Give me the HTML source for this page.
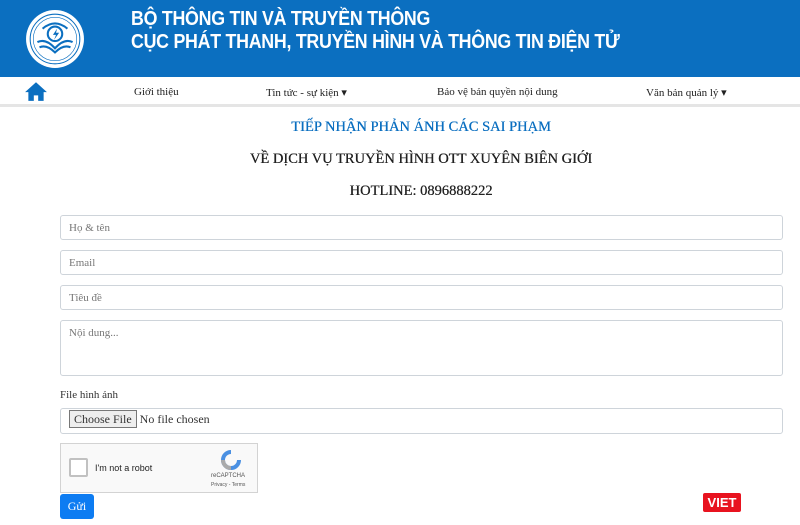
<!DOCTYPE html>
<html><head><meta charset="utf-8"><style>
*{box-sizing:border-box;margin:0;padding:0}
body{width:800px;height:525px;overflow:hidden;background:#fff;font-family:"Liberation Serif",serif;position:relative}
.hdr{position:absolute;left:0;top:0;width:800px;height:77px;background:#0b6fc0}
.t{position:absolute;left:131px;color:#fff;font-family:"Liberation Sans",sans-serif;font-weight:bold;font-size:20px;letter-spacing:-0.3px;transform:scaleX(0.89);transform-origin:0 0;white-space:nowrap}
.nav{position:absolute;top:77px;left:0;width:800px;height:30px;border-bottom:3px solid #e5e5e5;font-size:11px;color:#222}
.nav span{position:absolute;top:8px}
.c{position:absolute;left:42px;width:758px;text-align:center;font-size:14.5px;text-shadow:0.3px 0 0 currentColor}
.in{position:absolute;left:60px;width:723px;border:1px solid #ced4da;border-radius:3px;font-size:11px;color:#777;padding:6px 8px}
</style></head><body>
<div class="hdr">
<svg style="position:absolute;left:25px;top:9px" width="60" height="60" viewBox="0 0 58 58"><circle cx="29" cy="29" r="28" fill="#fff"/><circle cx="29" cy="29" r="24" fill="none" stroke="#0b6fc0" stroke-width="1"/><circle cx="29" cy="29" r="21" fill="none" stroke="#0b6fc0" stroke-width="0.6"/><circle cx="29" cy="24" r="7" fill="none" stroke="#0b6fc0" stroke-width="2"/><path d="M31 19l-4 6h3l-2 5 5-7h-3z" fill="#0b6fc0"/><path d="M12 32q8-4 17 6q9-10 17-6M14 37q7-3 15 5q8-8 15-5" fill="none" stroke="#0b6fc0" stroke-width="2"/><path d="M17 19q12-10 24 0" fill="none" stroke="#0b6fc0" stroke-width="2"/></svg>
<div class="t" style="top:8px">BỘ THÔNG TIN VÀ TRUYỀN THÔNG</div>
<div class="t" style="top:31px">CỤC PHÁT THANH, TRUYỀN HÌNH VÀ THÔNG TIN ĐIỆN TỬ</div>
</div>
<div class="nav">
<svg style="position:absolute;left:24px;top:4px" width="24" height="20" viewBox="0 0 22 18"><path d="M11 1L1 10h3v8h5v-5h4v5h5v-8h3z" fill="#0b6fc0"/></svg>
<span style="left:134px;top:9px">Giới thiệu</span>
<span style="left:266px;top:9px">Tin tức - sự kiện ▾</span>
<span style="left:437px;top:9px">Bảo vệ bản quyền nội dung</span>
<span style="left:646px;top:9px">Văn bản quản lý ▾</span>
</div>
<div class="c" style="top:119px;color:#0b6fc0">TIẾP NHẬN PHẢN ÁNH CÁC SAI PHẠM</div>
<div class="c" style="top:151px;color:#222">VỀ DỊCH VỤ TRUYỀN HÌNH OTT XUYÊN BIÊN GIỚI</div>
<div class="c" style="top:183px;color:#222">HOTLINE: 0896888222</div>
<div class="in" style="top:215px;height:25px">Họ &amp; tên</div>
<div class="in" style="top:250px;height:25px">Email</div>
<div class="in" style="top:285px;height:25px">Tiêu đề</div>
<div class="in" style="top:320px;height:56px">Nội dung...</div>
<div style="position:absolute;left:60px;top:389px;font-size:11px;color:#333">File hình ảnh</div>
<div class="in" style="top:408px;height:26px;padding:3px 8px;color:#333;font-size:12px"><span style="border:1px solid #777;background:#eee;padding:1px 4px">Choose File</span> No file chosen</div>
<div style="position:absolute;left:60px;top:443px;width:198px;height:50px;border:1px solid #d3d3d3;background:#f9f9f9;font-family:'Liberation Sans',sans-serif">
<div style="position:absolute;left:8px;top:14px;width:19px;height:19px;border:2px solid #c1c1c1;background:#fff;border-radius:2px"></div>
<div style="position:absolute;left:34px;top:19px;font-size:9px;color:#222">I'm not a robot</div>
<svg style="position:absolute;left:159px;top:6px" width="22" height="20" viewBox="0 0 22 20"><path d="M11 2a8 8 0 1 0 8 8" fill="none" stroke="#4a90e2" stroke-width="4"/><path d="M3 10a8 8 0 0 0 8 8" fill="none" stroke="#aaa" stroke-width="4"/></svg>
<div style="position:absolute;left:150px;top:29px;font-size:6px;color:#555">reCAPTCHA</div>
<div style="position:absolute;left:150px;top:38px;font-size:5px;color:#555">Privacy - Terms</div>
</div>
<div style="position:absolute;left:60px;top:494px;width:34px;height:25px;background:#0d7cf2;border-radius:3px;color:#fff;font-size:12px;text-align:center;line-height:25px">Gửi</div>
<div style="position:absolute;left:703px;top:493px;width:38px;height:19px;background:#e8131f;color:#fff;font-family:'Liberation Sans',sans-serif;font-weight:bold;font-size:13px;line-height:19px;text-align:center;border-radius:2px">VIET</div>
</body></html>
